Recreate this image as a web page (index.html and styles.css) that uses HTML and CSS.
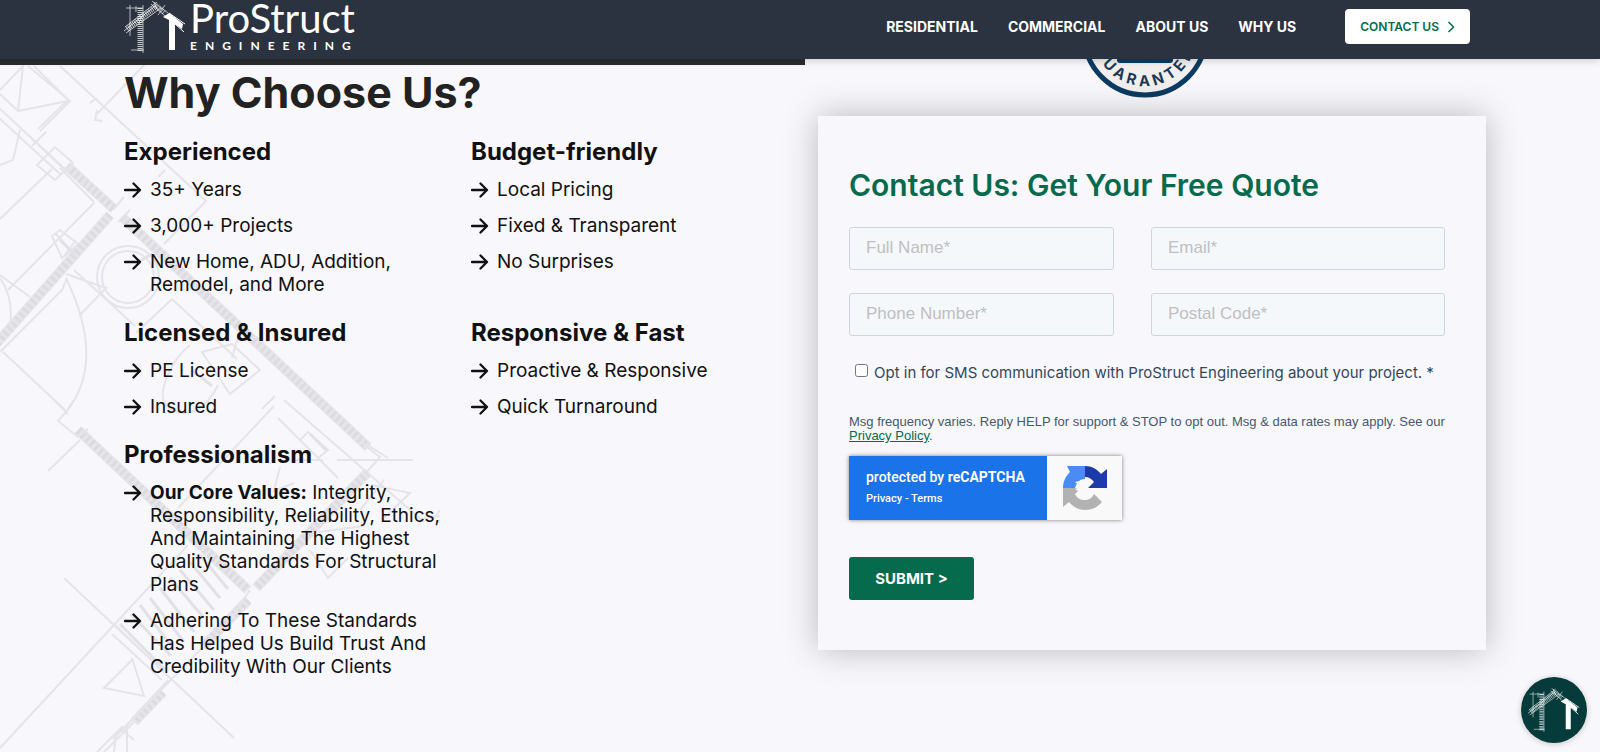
FILE: index.html
```html
<!DOCTYPE html>
<html lang="en">
<head>
    <meta charset="UTF-8">
    <meta name="viewport" content="width=device-width, initial-scale=1">
    <title>ProStruct Engineering</title>
    <link rel="stylesheet" href="styles.css">
</head>
<body>
    <!-- shared drawings -->
    <svg class="sprite" width="0" height="0" aria-hidden="true">
        <symbol id="arrow" viewBox="0 0 18 16">
            <path d="M1 8h15M9.500 1.500L16 8l-6.500 6.500" fill="none" stroke="currentColor" stroke-width="2.300" stroke-linecap="round" stroke-linejoin="round"/>
        </symbol>
        <symbol id="house" viewBox="0 0 62 52">
            <g stroke="#fff" fill="none" stroke-width="0.800">
                <path d="M2 7h17M6 4v31M12 5v6M19 4v48M7 49h13" opacity="0.800"/>
                <path d="M1 26L33 1M2 32L37 7M0 30L31 5" opacity="0.900"/>
                <path d="M28 0l16 12M27 3l14 12M34 14l7-10M30 1l3 7" opacity="0.800"/>
            </g>
            <path d="M16 7v43" stroke="#fff" stroke-width="5" stroke-dasharray="1 1" opacity="0.750"/>
            <path d="M3 28L33 5" stroke="#fff" stroke-width="5" stroke-dasharray="1 1" opacity="0.700"/>
            <path d="M32 4l9 8" stroke="#fff" stroke-width="5" stroke-dasharray="1 1" opacity="0.500"/>
            <path d="M39 16l6-4 14 11-1 5-7-5v26h-6V19z" fill="#fff"/>
            <path d="M45 12l16 11M50 22l10 9" stroke="#fff" stroke-width="1"/>
        </symbol>
    </svg>

    <header class="site-header">
        <a href="#" class="logo" aria-label="ProStruct Engineering">
            <svg class="logo-mark"><use href="#house"/></svg>
            <span class="logo-text">
                <span class="logo-name">ProStruct</span>
                <span class="logo-sub">ENGINEERING</span>
            </span>
        </a>
        <nav class="main-nav">
            <a href="#">RESIDENTIAL</a>
            <a href="#">COMMERCIAL</a>
            <a href="#">ABOUT US</a>
            <a href="#">WHY US</a>
        </nav>
        <a href="#quote" class="contact-btn">CONTACT US
            <svg width="8" height="12" viewBox="0 0 8 12"><path d="M1.500 1L6.500 6l-5 5" fill="none" stroke="currentColor" stroke-width="1.500"/></svg>
        </a>
    </header>

    <main class="page">
        <section class="why">
            <svg class="blueprint" width="450" height="692" viewBox="0 60 450 692" aria-hidden="true">
                <g class="wall">
                    <path d="M67 166L114 209M122 217L368 447M78 430L248 590M110 215L-4 344M368 472L256 588M248 600L203 647M163 692L134 722"/>
                </g>
                <g class="hatch">
                    <path d="M67 166L114 209M122 217L368 447M78 430L248 590M110 215L-4 344M368 472L256 588M248 600L203 647M163 692L134 722"/>
                </g>
                <g class="thin">
                    <path d="M-2 107L66 170M-2 117L60 174M28 66l42 35-30 30M34 66l34 34-30 29M0 90l23-24-5 45 50-10M0 94l18 17M20 130l-7 30-13 5"/>
                    <path d="M60 66L206 201l-42 43M145 64l-48 50M97 110l-2 10 7 1M90 103l7-5M165 170l-7 7"/>
                    <path d="M37 165l18-18 18 16-18 17zM32 139l32 30M46 132l-14 14M114 209l10-12M118 222l12-12M0 219l52-50M94 203L8 290M60 168l34 34"/>
                    <path d="M0 275l30 22M66 274l40 14L79 316M74 270L135 326M0 352L62 290l5-12M3 352l62 58M66 278c26 54 28 100 0 134M0 278q14 20 10 48"/>
                    <path d="M52 236l8-6 18 14-16 14zM76 240l-12 16M56 234l20 22"/>
                    <circle cx="128" cy="277" r="31"/><circle cx="128" cy="277" r="26"/>
                    <path d="M172 299l65 60M172 299l-36 34M240 330l-8 28M190 345c-18 14-34 48-24 60 14 14 36 12 52-20M202 352l30-8 28 26-30 24zM275 396l-13 13"/>
                    <path d="M54 400l14 14M66 412l-8 9 20 16 10-8M80 440L48 471M74 400l-8 12M274 406L178 508M284 400l140 122M290 460h33M337 460h76M362 443l18 14-14 16M388 458l-22-14"/>
                    <path d="M338 478l-60-60M280 467l-6 24 20-8M308 432l20 18-10 8-18-18zM372 485l38 8-26 25M384 480l-24 30M440 516L424 518M440 510l-9 12M310 550l18 28 20-20M318 532l46-6"/>
                    <path d="M188 545L0 748M64 578L234 738M132 658l12 38-40-8 28-28M115 625l50 48M112 634l50 46M250 590l-20 30M203 647l-90 92M168 680l-45 50"/>
                    <path d="M97 752l26-26M104 752l30-30M127 724v28M120 728l14 12M116 734l-2 18"/>
                </g>
                <g class="steps">
                    <path d="M120 624l45 46M131 614l40 42M140 605l32 42M150 598l34 44M160 588l34 44M170 578l34 40M180 570l34 40M190 562l30 36M200 555l28 34"/>
                    <path d="M138 262l14-8M192 370l20 16M310 434l16 16M60 240l14 14"/>
                </g>
            </svg>

            <div class="why-content">
                <h1>Why Choose Us?</h1>
                <div class="reasons">
                    <div class="reason">
                        <h2>Experienced</h2>
                        <ul>
                            <li><svg class="arrow"><use href="#arrow"/></svg><span>35+ Years</span></li>
                            <li><svg class="arrow"><use href="#arrow"/></svg><span>3,000+ Projects</span></li>
                            <li><svg class="arrow"><use href="#arrow"/></svg><span>New Home, ADU, Addition, Remodel, and More</span></li>
                        </ul>
                    </div>
                    <div class="reason">
                        <h2>Budget-friendly</h2>
                        <ul>
                            <li><svg class="arrow"><use href="#arrow"/></svg><span>Local Pricing</span></li>
                            <li><svg class="arrow"><use href="#arrow"/></svg><span>Fixed &amp; Transparent</span></li>
                            <li><svg class="arrow"><use href="#arrow"/></svg><span>No Surprises</span></li>
                        </ul>
                    </div>
                    <div class="reason">
                        <h2>Licensed &amp; Insured</h2>
                        <ul>
                            <li><svg class="arrow"><use href="#arrow"/></svg><span>PE License</span></li>
                            <li><svg class="arrow"><use href="#arrow"/></svg><span>Insured</span></li>
                        </ul>
                    </div>
                    <div class="reason">
                        <h2>Responsive &amp; Fast</h2>
                        <ul>
                            <li><svg class="arrow"><use href="#arrow"/></svg><span>Proactive &amp; Responsive</span></li>
                            <li><svg class="arrow"><use href="#arrow"/></svg><span>Quick Turnaround</span></li>
                        </ul>
                    </div>
                    <div class="reason">
                        <h2>Professionalism</h2>
                        <ul>
                            <li><svg class="arrow"><use href="#arrow"/></svg><span><strong>Our Core Values:</strong> Integrity, Responsibility, Reliability, Ethics, And Maintaining The Highest Quality Standards For Structural Plans</span></li>
                            <li><svg class="arrow"><use href="#arrow"/></svg><span>Adhering To These Standards Has Helped Us Build Trust And Credibility With Our Clients</span></li>
                        </ul>
                    </div>
                </div>
            </div>
        </section>

        <section class="quote" id="quote">
            <!-- lower part of the guarantee seal, the rest is under the header -->
            <svg class="seal" width="128" height="39" viewBox="0 89 128 39" role="img" aria-label="Guarantee">
                <circle cx="64" cy="64" r="61" fill="#f1efee" stroke="#0b3a63" stroke-width="5"/>
                <rect x="36" y="60" width="56" height="33" rx="3" fill="#0b3a63"/>
                <path id="seal-arc" d="M12 64a52 52 0 0 0 104 0" fill="none"/>
                <text class="seal-text" text-anchor="middle"><textPath href="#seal-arc" startOffset="50%">GUARANTEE</textPath></text>
            </svg>

            <form class="quote-card">
                <h2>Contact Us: Get Your Free Quote</h2>
                <div class="fields">
                    <input type="text" placeholder="Full Name*" aria-label="Full Name">
                    <input type="email" placeholder="Email*" aria-label="Email">
                    <input type="tel" placeholder="Phone Number*" aria-label="Phone Number">
                    <input type="text" placeholder="Postal Code*" aria-label="Postal Code">
                </div>
                <div class="opt-in">
                    <input type="checkbox" id="sms">
                    <label for="sms">Opt in for SMS communication with ProStruct Engineering about your project. *</label>
                </div>
                <p class="legal">Msg frequency varies. Reply HELP for support &amp; STOP to opt out. Msg &amp; data rates may apply. See our <a href="#">Privacy Policy</a>.</p>
                <div class="captcha">
                    <div class="captcha-text">
                        <p>protected by <strong>reCAPTCHA</strong></p>
                        <small><a href="#">Privacy</a> - <a href="#">Terms</a></small>
                    </div>
                    <div class="captcha-logo">
                        <svg width="44" height="44" viewBox="0 0 44 44">
                            <path d="M22 0v13c-5 0-8 3-10 9H0C0 15 3 10 7 6L4 0z" fill="#4a8cf5"/>
                            <path d="M22 0c7 0 12 3 16 8l6-5v19H25l6-6c-2-3-5-5-9-5z" fill="#1c3aa9"/>
                            <path d="M0 22h18l-6 6c2 4 5 6 10 6 4 0 7-2 9-6l8 8c-4 5-10 8-17 8-6 0-12-3-16-8l-6 5z" fill="#b2b2b2"/>
                            <path d="M12 16l5-1 5 5 1-8 6 3-5 7 5 6-6 4-5-5-6-4 6-2z" fill="#f9f9f9"/>
                        </svg>
                    </div>
                </div>
                <button type="submit" class="submit">SUBMIT &gt;</button>
            </form>
        </section>
    </main>

    <button type="button" class="chat" aria-label="Open chat">
        <svg width="52" height="44"><use href="#house"/></svg>
    </button>
</body>
</html>
```
FILE: styles.css
```css
* {
    box-sizing: border-box;
}
body {
    margin: 0;
    min-height: 100vh;
    display: flex;
    flex-direction: column;
    background-color: #f8f7fc;
    color: #111;
    font-family: Inter, Roboto, sans-serif;
}
h1, h2, p, ul {
    margin: 0;
    padding: 0;
}
.sprite {
    position: absolute;
}

/* header */
.site-header {
    display: flex;
    align-items: center;
    position: relative;
    z-index: 2;
    height: 59px;
    padding: 0 130px 6px 124px;
    background-color: #2c3340;
    box-shadow: 0 1px 8px rgba(0, 0, 0, 0.2);
}
.logo {
    display: flex;
    gap: 4px;
    color: #fff;
    text-decoration: none;
    margin: 0 auto 4px 0;
}
.logo-mark {
    width: 62px;
    height: 52px;
    margin-top: 4px;
}
.logo-text {
    display: flex;
    flex-direction: column;
    font-family: Lato, sans-serif;
}
.logo-name {
    font-size: 40px;
    line-height: 42px;
}
.logo-sub {
    font-size: 12px;
    line-height: 14px;
    font-weight: 700;
    letter-spacing: 8px;
}
.main-nav {
    display: flex;
    gap: 30px;
    margin-right: 49px;
}
.main-nav a {
    color: #fff;
    font-size: 14px;
    font-weight: 700;
    text-decoration: none;
}
.contact-btn {
    display: flex;
    align-items: center;
    gap: 8px;
    height: 35px;
    padding: 0 15px;
    border-radius: 4px;
    background-color: #fff;
    color: #066b4c;
    font-size: 12px;
    font-weight: 600;
    text-decoration: none;
}

.page {
    display: grid;
    grid-template-columns: 805fr 795fr;
    flex: 1;
}

/* left side */
.why {
    position: relative;
    overflow: hidden;
    border-top: 6px solid #2b2c2f;
    padding: 0 11px 0 124px;
}
.blueprint {
    position: absolute;
    top: -5px;
    left: 0;
    fill: none;
}
.blueprint .wall {
    stroke: #e6e5ea;
    stroke-width: 10px;
}
.blueprint .hatch {
    stroke: #dcdbe1;
    stroke-width: 8px;
    stroke-dasharray: 3 3;
}
.blueprint .thin {
    stroke: #e5e4ea;
    stroke-width: 2px;
}
.blueprint .steps {
    stroke: #e2e1e7;
    stroke-width: 3px;
}
.why-content {
    position: relative;
}
.why h1 {
    color: #222;
    font-size: 43px;
    line-height: 54px;
}
.reasons {
    display: grid;
    grid-template-columns: 1fr 1fr;
    column-gap: 24px;
    row-gap: 23px;
    padding-top: 19px;
}
.reason h2 {
    font-size: 24px;
    line-height: 28px;
    margin-bottom: 12px;
    font-weight: 700;
}
.reason ul {
    display: flex;
    flex-direction: column;
    gap: 13px;
    list-style: none;
    font-size: 19px;
    line-height: 23px;
}
.reason li {
    display: flex;
    gap: 8px;
}
.arrow {
    flex: none;
    width: 18px;
    height: 16px;
    margin-top: 4px;
}

/* quote form */
.quote {
    position: relative;
    z-index: 1;
    display: flex;
    flex-direction: column;
    padding: 0 114px 0 13px;
}
.seal {
    align-self: center;
    margin: 0 14px 18px 0;
}
.seal-text {
    fill: #1c3a58;
    font-size: 15px;
    font-weight: 700;
    letter-spacing: 4px;
}
.quote-card {
    padding: 48px 41px 50px 31px;
    background-color: #f8f7fc;
    box-shadow: 0 0 32px rgba(0, 0, 0, 0.25);
}
.quote-card h2 {
    color: #066b4c;
    font-size: 30px;
    line-height: 42px;
    font-weight: 600;
}
.fields {
    display: grid;
    grid-template-columns: 265fr 294fr;
    gap: 23px 37px;
    margin: 21px 0 28px;
}
.fields input {
    width: 100%;
    height: 43px;
    padding: 0 16px 2px;
    border: 1px solid #cbd6e2;
    border-radius: 3px;
    background-color: #f5f8fa;
    font-family: "Liberation Sans", Arial, sans-serif;
    font-size: 17px;
}
.fields input::placeholder {
    color: #bfbfbf;
}
.opt-in {
    display: flex;
    gap: 6px;
    padding-left: 6px;
    color: #33475b;
    font-size: 15px;
    line-height: 18px;
}
.opt-in input {
    width: 13px;
    height: 13px;
    margin: 0;
}
.legal {
    margin: 33px 0 13px;
    color: #45586c;
    font-family: "Liberation Sans", Arial, sans-serif;
    font-size: 13px;
    line-height: 14px;
}
.legal a {
    color: #066b4c;
}
.captcha {
    display: flex;
    width: 273px;
    height: 64px;
    box-shadow: 0 0 4px rgba(0, 0, 0, 0.5);
    font-family: Roboto, sans-serif;
    color: #fff;
}
.captcha-text {
    flex: 1;
    padding: 12px 17px;
    background-color: #1a73e8;
    font-size: 14px;
    line-height: 18px;
    font-weight: 500;
}
.captcha-text small {
    display: block;
    margin-top: 4px;
    font-size: 11px;
}
.captcha-text a {
    color: #fff;
    text-decoration: none;
}
.captcha-logo {
    width: 75px;
    display: flex;
    align-items: center;
    justify-content: center;
    background-color: #f9f9f9;
}
.submit {
    width: 125px;
    height: 43px;
    margin-top: 37px;
    border: 0;
    border-radius: 3px;
    background-color: #066b4c;
    color: #fff;
    font-family: Inter, sans-serif;
    font-size: 15px;
    font-weight: 700;
    cursor: pointer;
}

/* floating chat button */
.chat {
    position: fixed;
    z-index: 3;
    right: 13px;
    bottom: 9px;
    display: flex;
    align-items: center;
    justify-content: center;
    width: 66px;
    height: 66px;
    padding: 0;
    border: 0;
    border-radius: 50%;
    background-color: #053b3a;
    box-shadow: 0 1px 6px rgba(0, 0, 0, 0.2);
    cursor: pointer;
}
```
